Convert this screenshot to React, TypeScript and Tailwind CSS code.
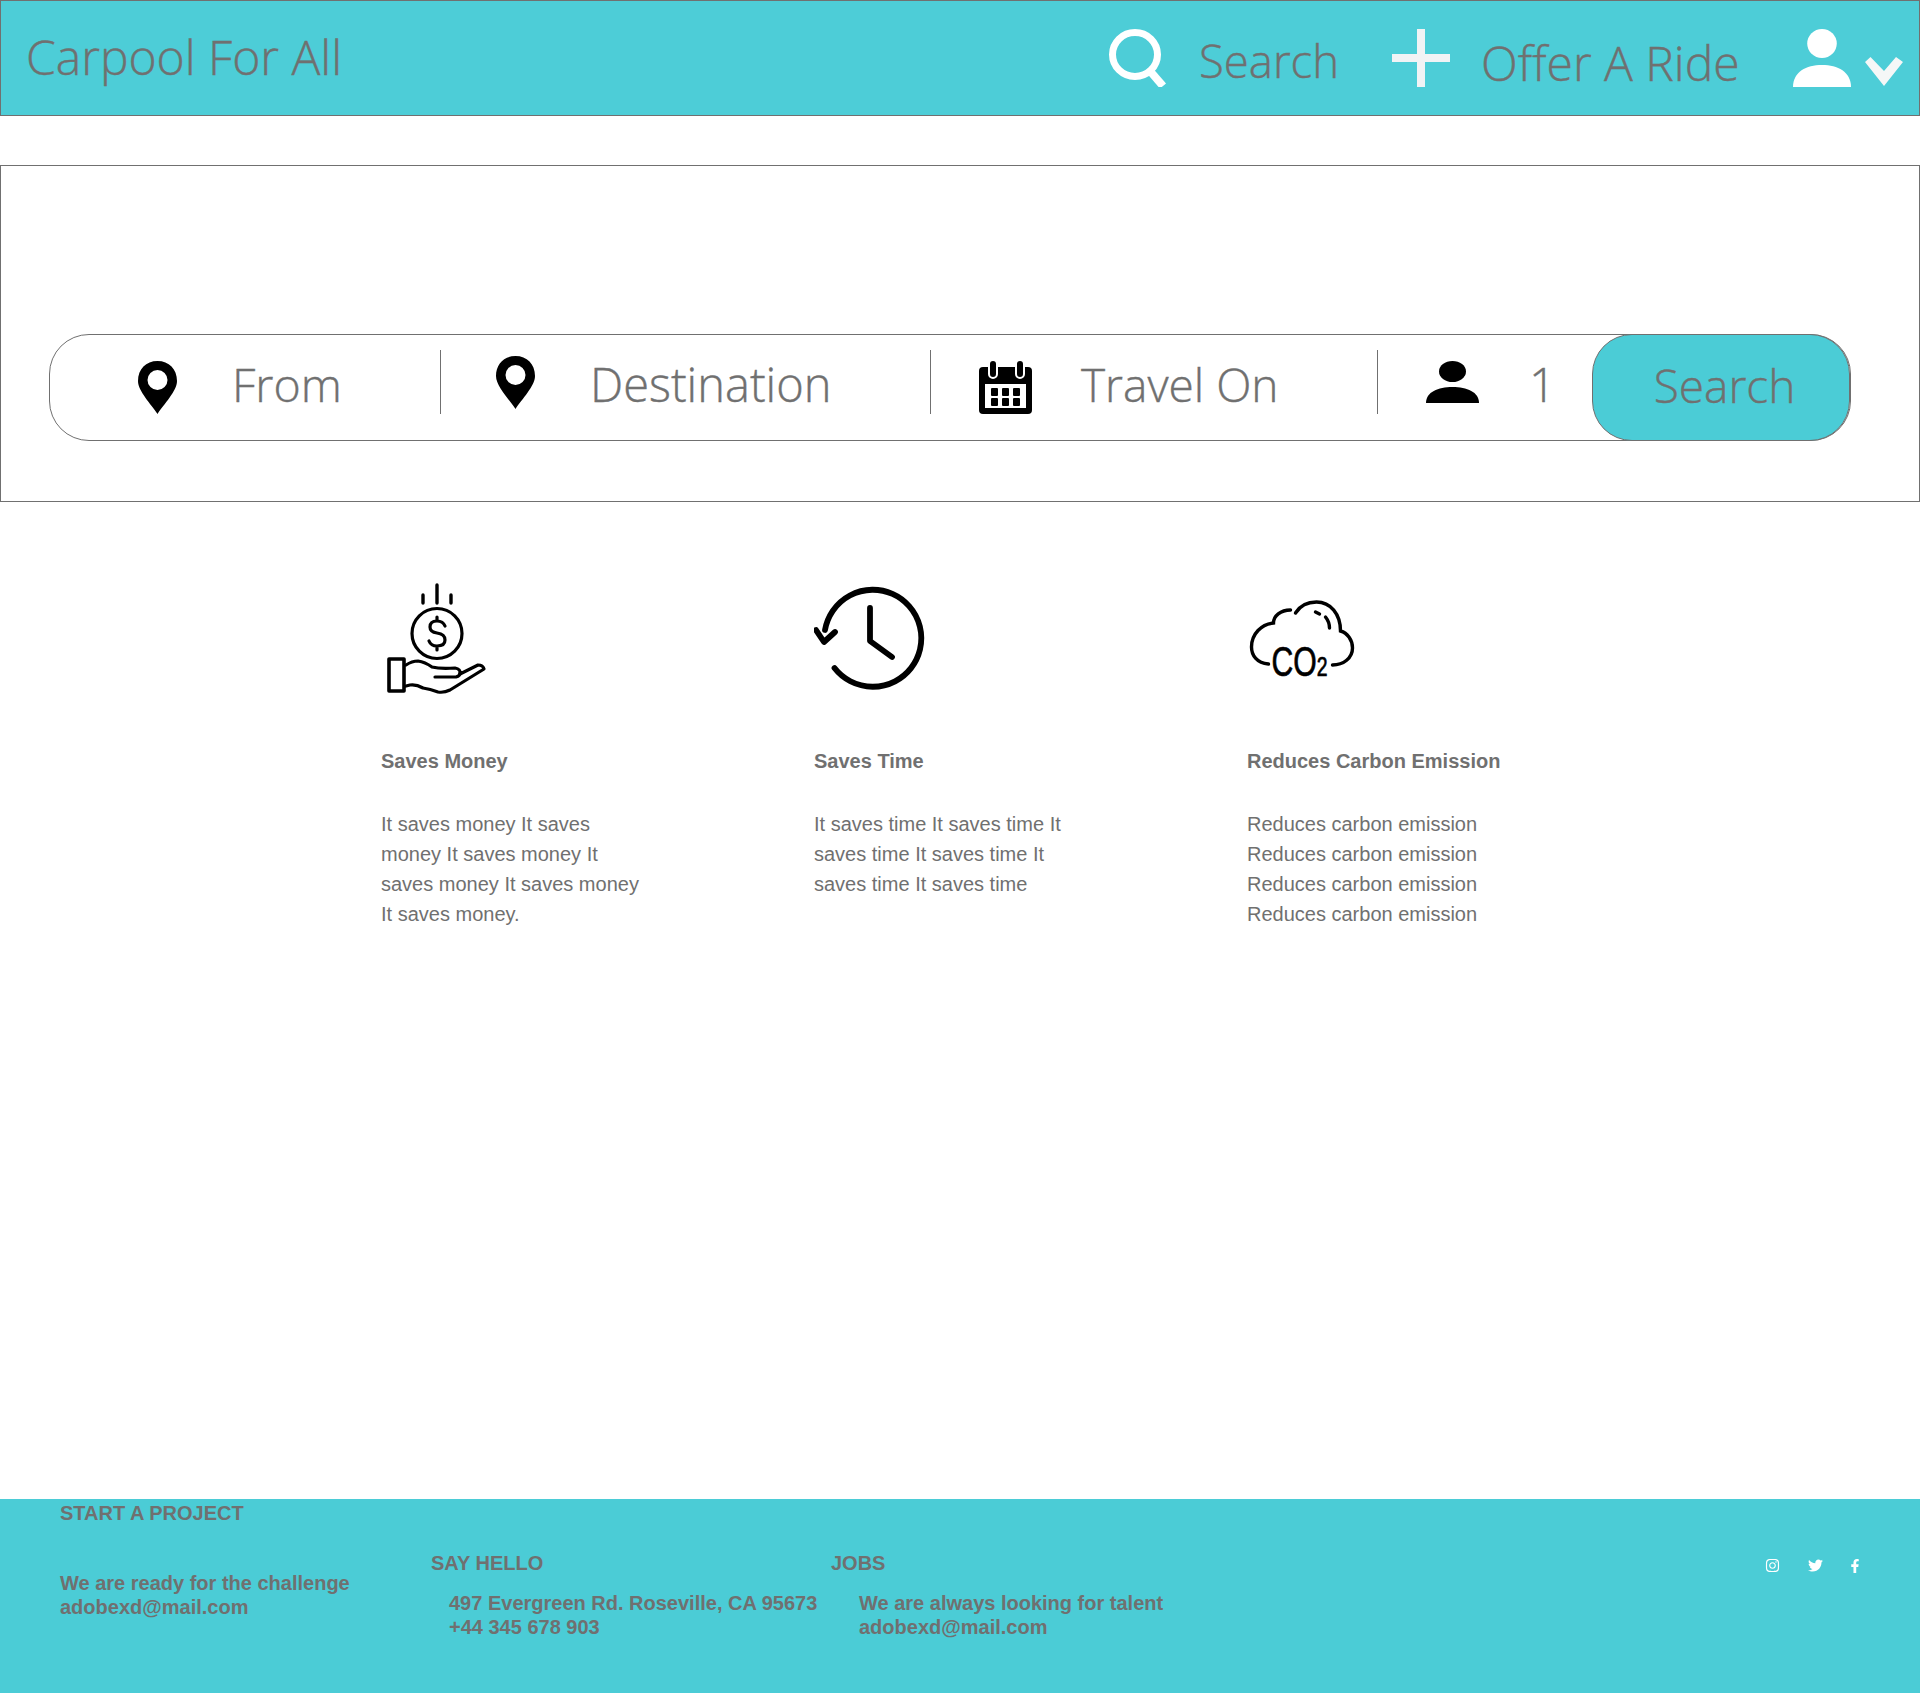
import { FaFacebookF, FaInstagram, FaTwitter } from "react-icons/fa";

const display = "font-['Open_Sans',sans-serif] font-light [-webkit-text-stroke:0.4px_#707070] text-[#707070] whitespace-nowrap";

function SearchIcon() {
  return (
    <svg width="58" height="58" viewBox="0 0 58 58" fill="none" stroke="#fff">
      <ellipse cx="26" cy="25.5" rx="22.5" ry="22" strokeWidth="7" />
      <path d="M41 42 L54 57" strokeWidth="8" />
    </svg>
  );
}

function PlusIcon() {
  return (
    <svg width="58" height="58" viewBox="0 0 58 58" fill="#f1f3f5">
      <rect x="25" y="0" width="8" height="58" />
      <rect x="0" y="25" width="58" height="8" />
    </svg>
  );
}

function PersonIcon({ width, height, fill }: { width: number; height: number; fill: string }) {
  return (
    <svg width={width} height={height} viewBox="0 0 53 42" preserveAspectRatio="none" fill={fill}>
      <ellipse cx="26.5" cy="10.5" rx="13.5" ry="10.5" />
      <path d="M0 42 C0 31 12 26 26.5 26 C41 26 53 31 53 42 Z" />
    </svg>
  );
}

function Chevron() {
  return (
    <svg width="38" height="29" viewBox="0 0 38 29" fill="#f5f7f7">
      <path d="M0 5 L5.5 0 L19 14 L31 0 L38 5 L19 29 Z" />
    </svg>
  );
}

function Pin() {
  return (
    <svg width="39" height="53" viewBox="0 0 39 53" fill="#000">
      <path
        fillRule="evenodd"
        d="M19.5 0 C8 0 0 8 0 20 C0 30 13 43 19.5 53 C26 43 39 30 39 20 C39 8 31 0 19.5 0 Z M19.5 9 A10 10 0 1 1 19.5 29 A10 10 0 1 1 19.5 9 Z"
      />
    </svg>
  );
}

function CalendarIcon() {
  return (
    <svg width="53" height="53" viewBox="0 0 53 53">
      <rect x="0" y="6" width="53" height="47" rx="4" fill="#000" />
      <rect x="6" y="23" width="41" height="24" fill="#fff" />
      <rect x="10" y="-1" width="8" height="18" rx="4" fill="#000" stroke="#fff" strokeWidth="2" />
      <rect x="37" y="-1" width="8" height="18" rx="4" fill="#000" stroke="#fff" strokeWidth="2" />
      <g fill="#000">
        <rect x="12" y="27" width="7" height="8" rx="1" />
        <rect x="23" y="27" width="7" height="8" rx="1" />
        <rect x="34" y="27" width="7" height="8" rx="1" />
        <rect x="12" y="37" width="7" height="8" rx="1" />
        <rect x="23" y="37" width="7" height="8" rx="1" />
        <rect x="34" y="37" width="7" height="8" rx="1" />
      </g>
    </svg>
  );
}

function HandIcon() {
  return (
    <svg width="114" height="114" viewBox="21 12 114 114" fill="none" stroke="#000" strokeWidth="3.2" strokeLinecap="round" strokeLinejoin="round">
      <path d="M63 25 V33 M77 15 V33 M91 25 V33" strokeWidth="3.4" />
      <circle cx="77" cy="63.5" r="25" />
      <path d="M85 56 Q83 51 77 51 Q70 51 70 57 Q70 62 77 63 Q85 64 85 70 Q85 76 77 76 Q71 76 69 71 M77 47 V51 M77 76 V80" />
      <rect x="29" y="89" width="15" height="32" strokeWidth="3.6" />
      <path d="M46 95 Q52 91 58 91 Q65 92 72 97 Q80 99 95 98 Q101 99 100 104 L118 95 Q123 95 124 99 L90 120 Q84 123 78 122 Q70 119 63 118 Q56 114 50 115 L46 116" />
      <path d="M75 107 H96 Q100 106 100 103" />
    </svg>
  );
}

function ClockIcon() {
  return (
    <svg width="114" height="114" viewBox="14 12 114 114" fill="none" stroke="#000" strokeWidth="5.8" strokeLinecap="round" strokeLinejoin="round">
      <path d="M34.5 98 A48.5 48.5 0 1 0 25 60" />
      <path d="M16 60 L24 72 L35 62" />
      <path d="M70 38 V71 L92 87" />
    </svg>
  );
}

function CloudIcon() {
  return (
    <svg width="114" height="114" viewBox="18.5 2 114 114" fill="none" stroke="#000" strokeWidth="3.4" strokeLinecap="round">
      <path d="M40 84 C28 83 23 75 23 67 C23 54 33 44 45 43 C45 36 52 30 62 30" />
      <path d="M67 33 C72 25 80 22 88 22 C102 22 112 34 112 51 C119 53 124 60 124 68 C124 78 115 85 104 85" />
      <path d="M87 32 L91 34 M97 37 Q101 42 101 48" />
      <text x="43" y="96" stroke="#000" strokeWidth="0.7" fill="#000" fontFamily="'Liberation Sans', sans-serif" fontSize="42" textLength="56" lengthAdjust="spacingAndGlyphs">
        CO<tspan fontSize="27">2</tspan>
      </text>
    </svg>
  );
}

const features = [
  {
    icon: <HandIcon />,
    title: "Saves Money",
    lines: ["It saves money It saves", "money It saves money It", "saves money It saves money", "It saves money."],
  },
  {
    icon: <ClockIcon />,
    title: "Saves Time",
    lines: ["It saves time It saves time It", "saves time It saves time It", "saves time It saves time"],
  },
  {
    icon: <CloudIcon />,
    title: "Reduces Carbon Emission",
    lines: ["Reduces carbon emission", "Reduces carbon emission", "Reduces carbon emission", "Reduces carbon emission"],
  },
];

export default function App() {
  return (
    <div className="h-[1693px] flex flex-col bg-white font-['Liberation_Sans',sans-serif] text-[#707070] overflow-hidden">
      <header className="h-[116px] shrink-0 flex bg-[#4dcdd7] border border-[#707070] pt-7">
        <div className={`${display} ml-[25px] -mt-px w-[340px] text-[48px] leading-[58px]`}>Carpool For All</div>
        <div className="ml-[743px] flex">
          <SearchIcon />
          <div className={`${display} ml-8 w-[193px] text-[45.5px] leading-[62px]`}>Search</div>
          <PlusIcon />
          <div className={`${display} ml-[31px] mt-[3px] w-[312px] text-[48px] leading-[62px]`}>Offer A Ride</div>
          <PersonIcon width={58} height={58} fill="#fff" />
          <div className="ml-[14px] mt-7">
            <Chevron />
          </div>
        </div>
      </header>

      <section className="mt-[49px] h-[337px] shrink-0 flex items-end border border-[#707070] pb-[60px] pl-[48px]">
        <div className="w-[1802px] h-[107px] flex items-center border border-[#707070] rounded-[40px]">
          <div className="w-[390px] flex items-center pl-[88px]">
            <Pin />
            <span className={`${display} ml-[55px] -mt-[7px] text-[46.5px] leading-[60px]`}>From</span>
          </div>
          <div className="w-px h-16 -mt-[11px] bg-[#707070]" />
          <div className="w-[489px] flex items-center pl-[55px]">
            <div className="-mt-[10px]"><Pin /></div>
            <span className={`${display} ml-[55px] -mt-[7px] text-[47px] leading-[60px]`}>Destination</span>
          </div>
          <div className="w-px h-16 -mt-[11px] bg-[#707070]" />
          <div className="w-[446px] flex items-center pl-[48px]">
            <CalendarIcon />
            <span className={`${display} ml-[49px] -mt-[7px] text-[46px] leading-[60px]`}>Travel On</span>
          </div>
          <div className="w-px h-16 -mt-[11px] bg-[#707070]" />
          <div className="w-[214px] flex items-center pl-[48px]">
            <div className="-mt-[11px]"><PersonIcon width={53} height={42} fill="#000" /></div>
            <span className={`${display} ml-[50px] -mt-[7px] text-[47px] leading-[60px]`}>1</span>
          </div>
          <button className="w-[258px] h-[107px] -my-px flex items-center justify-center rounded-[40px] border border-[#707070] bg-[#4bccd6]">
            <span className={`${display} ml-[7px] -mt-[5px] text-[46px] leading-[60px]`}>Search</span>
          </button>
        </div>
      </section>

      <main className="flex-1 flex pt-[80px] pl-[381px]">
        {features.map((feature) => (
          <div key={feature.title} className="w-[433px]">
            <div className="h-[114px]">{feature.icon}</div>
            <h3 className="mt-[53px] text-[20px] leading-6 font-bold">{feature.title}</h3>
            <div className="mt-[36px] text-[20px] leading-[30px]">
              {feature.lines.map((line, i) => (
                <p key={i}>{line}</p>
              ))}
            </div>
          </div>
        ))}
      </main>

      <footer className="h-[194px] shrink-0 flex bg-[#4bccd6] text-[20px] leading-6 font-bold">
        <div className="ml-[60px] w-[371px] pt-[2px]">
          <h4>START A PROJECT</h4>
          <p className="mt-[46px]">We are ready for the challenge</p>
          <p>adobexd@mail.com</p>
        </div>
        <div className="w-[400px] pt-[52px]">
          <h4>SAY HELLO</h4>
          <div className="mt-4 ml-[18px]">
            <p>497 Evergreen Rd. Roseville, CA 95673</p>
            <p>+44 345 678 903</p>
          </div>
        </div>
        <div className="w-[400px] pt-[52px]">
          <h4>JOBS</h4>
          <div className="mt-4 ml-7">
            <p>We are always looking for talent</p>
            <p>adobexd@mail.com</p>
          </div>
        </div>
        <div className="ml-auto mr-[58px] mt-[59px] flex items-start text-white">
          <FaInstagram size={15} />
          <FaTwitter size={15} className="ml-[28px]" />
          <FaFacebookF size={14} className="ml-[25px] mt-px" />
        </div>
      </footer>
    </div>
  );
}
